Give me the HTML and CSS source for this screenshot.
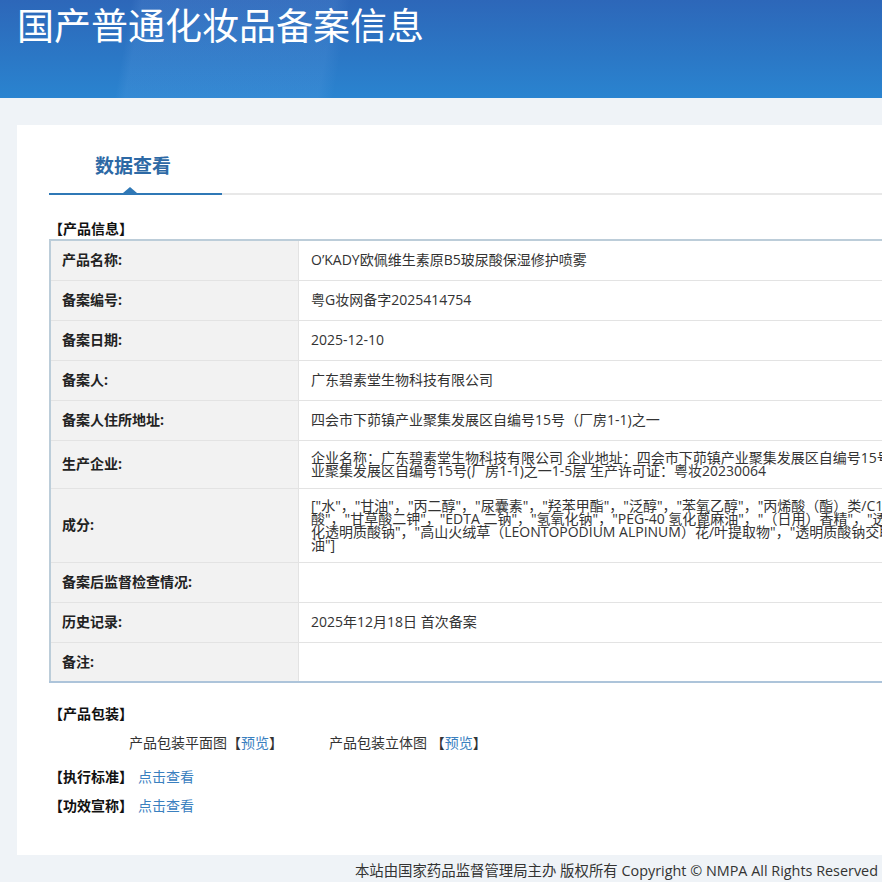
FILE: index.html
```html
<!DOCTYPE html>
<html lang="zh-CN">
<head>
    <meta charset="UTF-8" />
    <meta name="viewport" content="width=device-width, initial-scale=1.0" />
    <title>国产普通化妆品备案信息</title>
    <link rel="stylesheet" href="styles.css">
</head>
<body>
    <div class="banner">
        <h1>国产普通化妆品备案信息</h1>
    </div>

    <div class="main">
        <div class="card">
            <div class="tabs">
                <div class="tab">数据查看</div>
            </div>

            <div class="section-title">【产品信息】</div>
            <table class="info-table">
                <tr>
                    <th>产品名称:</th>
                    <td>O’KADY欧佩维生素原B5玻尿酸保湿修护喷雾</td>
                </tr>
                <tr>
                    <th>备案编号:</th>
                    <td>粤G妆网备字2025414754</td>
                </tr>
                <tr>
                    <th>备案日期:</th>
                    <td>2025-12-10</td>
                </tr>
                <tr>
                    <th>备案人:</th>
                    <td>广东碧素堂生物科技有限公司</td>
                </tr>
                <tr>
                    <th>备案人住所地址:</th>
                    <td>四会市下茆镇产业聚集发展区自编号15号（厂房1-1)之一</td>
                </tr>
                <tr>
                    <th>生产企业:</th>
                    <td>
                        <span class="line">企业名称：广东碧素堂生物科技有限公司 企业地址：四会市下茆镇产业聚集发展区自编号15号（厂房1-1)之一 生产地址：四会市下茆镇产</span>
                        <span class="line">业聚集发展区自编号15号(厂房1-1)之一1-5层 生产许可证：粤妆20230064</span>
                    </td>
                </tr>
                <tr>
                    <th>成分:</th>
                    <td>
                        <span class="line">["水"，"甘油"，"丙二醇"，"尿囊素"，"羟苯甲酯"，"泛醇"，"苯氧乙醇"，"丙烯酸（酯）类/C10-30 烷醇丙烯酸酯交联聚合物"，"羟苯丙</span>
                        <span class="line">酸"，"甘草酸二钾"，"EDTA 二钠"，"氢氧化钠"，"PEG-40 氢化蓖麻油"，"（日用）香精"，"透明质酸钠"，"水解透明质酸钠"，"乙酰</span>
                        <span class="line">化透明质酸钠"，"高山火绒草（LEONTOPODIUM ALPINUM）花/叶提取物"，"透明质酸钠交联聚合物"，"氢化卵磷脂"，"辛甘醇"，"蓖麻</span>
                        <span class="line">油"]</span>
                    </td>
                </tr>
                <tr>
                    <th>备案后监督检查情况:</th>
                    <td></td>
                </tr>
                <tr>
                    <th>历史记录:</th>
                    <td>2025年12月18日 首次备案</td>
                </tr>
                <tr>
                    <th>备注:</th>
                    <td></td>
                </tr>
            </table>

            <div class="section-title section-gap">【产品包装】</div>
            <div class="pack-row">
                <div class="pack-item">产品包装平面图【<a href="#">预览</a>】</div>
                <div class="pack-item">产品包装立体图 【<a href="#">预览</a>】</div>
            </div>

            <div class="link-row">
                <span class="section-label">【执行标准】</span>
                <a href="#">点击查看</a>
            </div>
            <div class="link-row link-row-tight">
                <span class="section-label">【功效宣称】</span>
                <a href="#">点击查看</a>
            </div>
        </div>
    </div>

    <div class="footer">本站由国家药品监督管理局主办 版权所有 Copyright © NMPA All Rights Reserved</div>
</body>
</html>
```

FILE: styles.css
```css
html, body {
    overflow: hidden;
}

body {
    margin: 0;
    background-color: #eff3f7;
    font-family: "Open Sans", "Noto Sans CJK SC", sans-serif;
    font-size: 14px;
    color: #333;
}

a {
    color: #3a80bf;
    text-decoration: none;
}

/* top banner */
.banner {
    height: 98px;
    background:
        linear-gradient(100deg, transparent 130px, rgba(130, 180, 240, 0.12) 140px, rgba(130, 180, 240, 0.12) 330px, transparent 345px),
        linear-gradient(180deg, #2d67b9 0%, #2b78c6 60%, #2a84d0 100%);
}

.banner h1 {
    margin: 0;
    padding-left: 17px;
    font: 400 37px/48px "Noto Sans CJK SC", sans-serif;
    color: #fff;
}

.main {
    padding: 27px 0 0 17px;
}

.card {
    width: 1250px;
    background-color: #fff;
    padding: 0 0 41px 32px;
}

/* tab strip */
.tabs {
    display: flex;
    height: 68px;
    border-bottom: 2px solid #e8e8e8;
}

.tab {
    position: relative;
    width: 127px;
    height: 38px;
    padding: 30px 0 0 46px;
    margin-bottom: -2px;
    border-bottom: 2px solid #2f78b6;
    font: 700 19px/20px "Noto Sans CJK SC", sans-serif;
    color: #2d69a5;
}

.tab::after {
    content: "";
    position: absolute;
    left: 74px;
    bottom: 0;
    border-left: 7px solid transparent;
    border-right: 7px solid transparent;
    border-bottom: 6px solid #2f78b6;
}

.section-title,
.section-label {
    font-weight: 700;
    color: #111;
}

.section-title {
    margin: 26px 0 2px;
    line-height: 16px;
}

.section-gap {
    margin-top: 23px;
}

/* info table */
.info-table {
    width: 1150px;
    border-collapse: collapse;
    border-top: 2px solid #bccdd9;
    border-left: 2px solid #bccdd9;
    border-bottom: 2px solid #adc4da;
}

.info-table tr {
    height: 40px;
}

.info-table th,
.info-table td {
    padding: 10px 12px 11px;
    line-height: 13px;
    border-bottom: 1px solid #e3e3e3;
    text-align: left;
    vertical-align: middle;
}

.info-table th {
    width: 224px;
    padding-left: 11px;
    background-color: #f2f2f2;
    border-right: 1px solid #e3e3e3;
    font-weight: 700;
    color: #222;
}

.info-table td {
    white-space: nowrap;
}

.line {
    display: block;
}

/* packaging + links */
.pack-row {
    display: flex;
    margin-top: 13px;
    padding-left: 80px;
    line-height: 16px;
}

.pack-item {
    width: 200px;
}

.link-row {
    display: flex;
    gap: 5px;
    margin-top: 18px;
    line-height: 16px;
}

.link-row-tight {
    margin-top: 13px;
}

.footer {
    padding: 8px 4px 6px 0;
    text-align: right;
    font-size: 14.4px;
    line-height: 16px;
    color: #333;
}
```
